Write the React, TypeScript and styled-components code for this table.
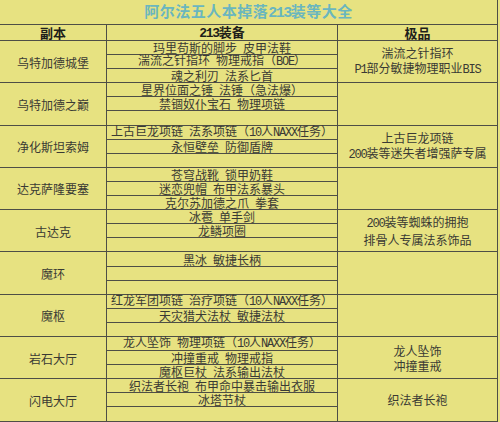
import React from 'react';
import styled, { createGlobalStyle } from 'styled-components';

const YELLOW = '#e7e281';
const LINE = '#4e4e46';

const GlobalStyle = createGlobalStyle`
  body {
    margin: 0;
    background: ${YELLOW};
  }
`;

type Group = {
  name: string;
  items: string[];
  pick: string[];
};

const groups: Group[] = [
  {
    name: '乌特加德城堡',
    items: ['玛里苟斯的脚步 皮甲法鞋', '湍流之针指环 物理戒指（BOE）', '魂之利刃 法系匕首'],
    pick: ['湍流之针指环', 'P1部分敏捷物理职业BIS'],
  },
  {
    name: '乌特加德之巅',
    items: ['星界位面之锤 法锤（急法爆）', '禁锢奴仆宝石 物理项链', ''],
    pick: [],
  },
  {
    name: '净化斯坦索姆',
    items: ['上古巨龙项链 法系项链（10人NAXX任务）', '永恒壁垒 防御盾牌', ''],
    pick: ['上古巨龙项链', '200装等迷失者增强萨专属'],
  },
  {
    name: '达克萨隆要塞',
    items: ['苍穹战靴 锁甲奶鞋', '迷恋兜帽 布甲法系暴头', '克尔苏加德之爪 拳套'],
    pick: [],
  },
  {
    name: '古达克',
    items: ['冰雹 单手剑', '龙鳞项圈', ''],
    pick: ['200装等蜘蛛的拥抱', '排骨人专属法系饰品'],
  },
  {
    name: '魔环',
    items: ['黑冰 敏捷长柄', '', ''],
    pick: [],
  },
  {
    name: '魔枢',
    items: ['红龙军团项链 治疗项链（10人NAXX任务）', '天灾猎犬法杖 敏捷法杖', ''],
    pick: [],
  },
  {
    name: '岩石大厅',
    items: ['龙人坠饰 物理项链（10人NAXX任务）', '冲撞重戒 物理戒指', '魔枢巨杖 法系输出法杖'],
    pick: ['龙人坠饰', '冲撞重戒'],
  },
  {
    name: '闪电大厅',
    items: ['织法者长袍 布甲命中暴击输出衣服', '冰塔节杖', ''],
    pick: ['织法者长袍'],
  },
];

const Sheet = styled.div`
  display: grid;
  grid-template-columns: 107px 231px 160px;
  grid-template-rows: 25px 16px repeat(27, 14.1px);
  width: 498px;
  background: ${YELLOW};
  color: #3a3a34;
  font-family: "Noto Sans CJK SC", sans-serif;
  font-size: 12px;
`;

const Cell = styled.div`
  box-sizing: border-box;
  border-right: 1px solid ${LINE};
  border-bottom: 1px solid ${LINE};
  display: flex;
  align-items: center;
  justify-content: center;
  white-space: nowrap;
  min-width: 0;
`;

const Title = styled(Cell)`
  grid-column: 1 / span 3;
  padding-bottom: 3px;
  font-size: 15px;
  font-weight: 700;
  color: #6ab6bf;
  letter-spacing: 0.5px;
`;

const HeadCell = styled(Cell)`
  font-size: 13px;
  font-weight: 700;
  line-height: 15px;
  color: #1e1e1a;
`;

const NameCell = styled(Cell)<{ $row: number }>`
  grid-column: 1;
  grid-row: ${({ $row }) => $row} / span 3;
  padding-top: 1px;
`;

const ItemCell = styled(Cell)<{ $row: number }>`
  grid-column: 2;
  grid-row: ${({ $row }) => $row};
  align-items: flex-end;
  line-height: 12px;
  overflow: visible;
`;

const PickCell = styled(Cell)<{ $row: number }>`
  grid-column: 3;
  grid-row: ${({ $row }) => $row} / span 3;
  flex-direction: column;
  line-height: 15px;
`;

const Text = styled.span`
  display: block;
  text-align: center;
`;

const Latin = styled.span`
  font-family: "Liberation Mono", monospace;
  letter-spacing: -0.1em;
`;

// SimSun-style text: half-width Latin runs and a wider word gap
const withLatin = (text: string) =>
  text
    .replace(/ /g, '\u2002')
    .split(/([A-Za-z0-9]+)/)
    .map((part, i) =>
      /^[A-Za-z0-9]+$/.test(part) ? <Latin key={i}>{part}</Latin> : part
    );

export default function App() {
  return (
    <>
      <GlobalStyle />
      <Sheet>
        <Title>
          <Text>{withLatin('阿尔法五人本掉落213装等大全')}</Text>
        </Title>
        <HeadCell>
          <Text>副本</Text>
        </HeadCell>
        <HeadCell>
          <Text>{withLatin('213装备')}</Text>
        </HeadCell>
        <HeadCell>
          <Text>极品</Text>
        </HeadCell>
        {groups.map((group, g) => {
          const row = 3 + g * 3;
          return (
            <React.Fragment key={group.name}>
              <NameCell $row={row}>
                <Text>{group.name}</Text>
              </NameCell>
              {group.items.map((item, i) => (
                <ItemCell key={i} $row={row + i}>
                  {item && <Text>{withLatin(item)}</Text>}
                </ItemCell>
              ))}
              <PickCell $row={row}>
                {group.pick.map((line) => (
                  <Text key={line}>{withLatin(line)}</Text>
                ))}
              </PickCell>
            </React.Fragment>
          );
        })}
      </Sheet>
    </>
  );
}
